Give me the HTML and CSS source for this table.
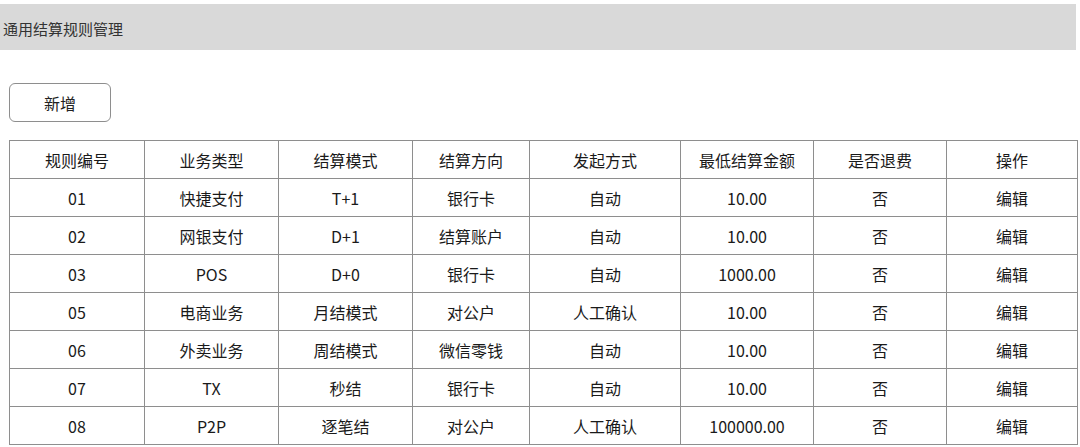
FILE: index.html
```html
<!DOCTYPE html>
<html lang="zh">
<head>
<meta charset="utf-8">
<link rel="stylesheet" href="styles.css">
</head>
<body>
<div class="page">
  <div class="titlebar">通用结算规则管理</div>
  <div class="toolbar"><button class="btn">新增</button></div>
  <table class="grid">
    <colgroup>
      <col class="c1"><col class="c2"><col class="c3"><col class="c4"><col class="c5"><col class="c6"><col class="c7"><col class="c8">
    </colgroup>
    <thead>
      <tr><th>规则编号</th><th>业务类型</th><th>结算模式</th><th>结算方向</th><th>发起方式</th><th>最低结算金额</th><th>是否退费</th><th>操作</th></tr>
    </thead>
    <tbody>
      <tr><td>01</td><td>快捷支付</td><td>T+1</td><td>银行卡</td><td>自动</td><td>10.00</td><td>否</td><td>编辑</td></tr>
      <tr><td>02</td><td>网银支付</td><td>D+1</td><td>结算账户</td><td>自动</td><td>10.00</td><td>否</td><td>编辑</td></tr>
      <tr><td>03</td><td>POS</td><td>D+0</td><td>银行卡</td><td>自动</td><td>1000.00</td><td>否</td><td>编辑</td></tr>
      <tr><td>05</td><td>电商业务</td><td>月结模式</td><td>对公户</td><td>人工确认</td><td>10.00</td><td>否</td><td>编辑</td></tr>
      <tr><td>06</td><td>外卖业务</td><td>周结模式</td><td>微信零钱</td><td>自动</td><td>10.00</td><td>否</td><td>编辑</td></tr>
      <tr><td>07</td><td>TX</td><td>秒结</td><td>银行卡</td><td>自动</td><td>10.00</td><td>否</td><td>编辑</td></tr>
      <tr><td>08</td><td>P2P</td><td>逐笔结</td><td>对公户</td><td>人工确认</td><td>100000.00</td><td>否</td><td>编辑</td></tr>
    </tbody>
  </table>
</div>
</body>
</html>
```

FILE: styles.css
```css
html, body {
  margin: 0;
  padding: 0;
  background: #ffffff;
}
body {
  font-family: "Noto Sans CJK SC", "Noto Sans", "Liberation Sans", sans-serif;
  color: #222222;
}
.page {
  padding-top: 4px;
  width: 1080px;
}
.titlebar {
  width: 1073px;
  height: 46px;
  background: #d9d9d9;
  padding-left: 3px;
  font-size: 15px;
  line-height: 49px;
  color: #333333;
  box-sizing: content-box;
}
.toolbar {
  padding: 33px 0 0 9px;
  height: 38px;
}
.btn {
  display: block;
  width: 102px;
  height: 39px;
  border: 1px solid #8e8e8e;
  border-radius: 6px;
  background: #ffffff;
  font-family: inherit;
  font-size: 16px;
  color: #222222;
  padding: 0;
  cursor: pointer;
}
.grid {
  margin: 19px 0 0 9px;
  border-collapse: collapse;
  table-layout: fixed;
  width: 1068px;
  font-size: 16px;
  color: #1a1a1a;
}
.grid th, .grid td {
  border: 1px solid #8e8e8e;
  text-align: center;
  font-weight: normal;
  padding: 0;
  height: 37px;
  line-height: 20px;
}
.c1 { width: 135px; }
.c2 { width: 134px; }
.c3 { width: 134px; }
.c4 { width: 117px; }
.c5 { width: 151px; }
.c6 { width: 133px; }
.c7 { width: 133px; }
.c8 { width: 131px; }
```
